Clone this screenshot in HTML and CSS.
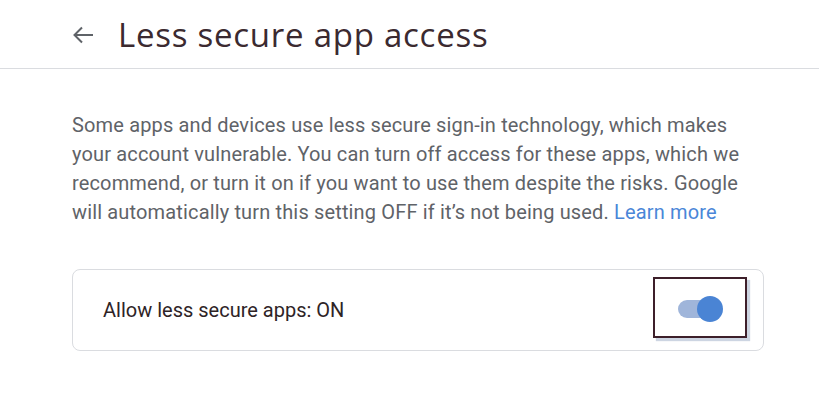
FILE: index.html
```html
<!DOCTYPE html>
<html>
<head>
<meta charset="utf-8">
<link rel="stylesheet" href="styles.css">
</head>
<body>
<header class="top">
  <svg class="back" width="22" height="20" viewBox="0 0 22 20"><path d="M21 10H2.5M10 2.5L2.5 10l7.5 7.5" fill="none" stroke="#5f6368" stroke-width="2"/></svg>
  <h1 class="title">Less secure app access</h1>
</header>
<main class="content">
  <p class="desc">Some apps and devices use less secure sign-in technology, which makes your account vulnerable. You can turn off access for these apps, which we recommend, or turn it on if you want to use them despite the risks. Google will automatically turn this setting OFF if it’s not being used. <a class="link" href="#">Learn more</a></p>
  <div class="card">
    <span class="label">Allow less secure apps: ON</span>
    <div class="toggle-box">
      <div class="toggle"><span class="track"></span><span class="thumb"></span></div>
    </div>
  </div>
</main>
</body>
</html>
```
FILE: styles.css
```css
html, body { margin: 0; padding: 0; background: #fff; }
body { font-family: Roboto, "Noto Sans", sans-serif; }
.top {
  height: 68px;
  border-bottom: 1px solid #dadce0;
  display: flex;
  align-items: center;
  padding-left: 72px;
  box-sizing: content-box;
}
.back { margin-top: 1px; }
.title {
  margin: 0 0 0 24px;
  font-family: "Open Sans", sans-serif;
  font-weight: 400;
  font-size: 33px;
  color: #3b2a30;
  letter-spacing: 0.75px;
}
.content { padding: 42px 55px 0 72px; }
.desc {
  margin: 0;
  font-size: 20px;
  line-height: 29px;
  letter-spacing: 0.15px;
  color: #5f6368;
}
.link { color: #4a86d8; text-decoration: none; }
.card {
  margin-top: 42px;
  border: 1px solid #dadce0;
  border-radius: 8px;
  display: flex;
  justify-content: space-between;
  padding: 7px 16px 12px 30px;
}
.label {
  align-self: center;
  font-size: 20px;
  color: #2e2326;
  margin-top: 4px;
}
.toggle-box {
  width: 90px;
  height: 57px;
  border: 2px solid #3d1f2a;
  box-shadow: 3px 3px 1px #cdd5e2;
  display: flex;
  align-items: center;
  justify-content: center;
}
.toggle { position: relative; width: 45px; height: 26px; margin-top: 3px; }
.track {
  position: absolute; left: 0; top: 4px;
  width: 39px; height: 18px; border-radius: 9px;
  background: #9fb5da;
}
.thumb {
  position: absolute; right: 0; top: 0;
  width: 26px; height: 26px; border-radius: 50%;
  background: #4a84d4;
}
```
